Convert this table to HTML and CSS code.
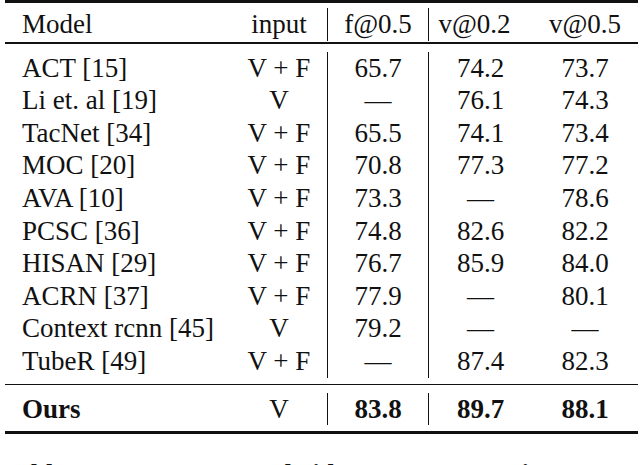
FILE: index.html
```html
<!DOCTYPE html>
<html lang="en">
<head>
    <meta charset="UTF-8">
    <meta name="viewport" content="width=device-width, initial-scale=1.0">
    <title>Frame and video mAP comparison</title>
    <link rel="stylesheet" href="styles.css">
</head>
<body>
    <div class="results">
        <div class="section head">
            <div class="row">
                <div class="cell name">Model</div>
                <div class="cell">input</div>
                <div class="cell split">f@0.5</div>
                <div class="cell split shift">v@0.2</div>
                <div class="cell">v@0.5</div>
            </div>
        </div>

        <div class="section body">
            <div class="row">
                <div class="cell name">ACT [15]</div>
                <div class="cell">V + F</div>
                <div class="cell split">65.7</div>
                <div class="cell split">74.2</div>
                <div class="cell">73.7</div>
            </div>
            <div class="row">
                <div class="cell name">Li et. al [19]</div>
                <div class="cell">V</div>
                <div class="cell split">&mdash;</div>
                <div class="cell split">76.1</div>
                <div class="cell">74.3</div>
            </div>
            <div class="row">
                <div class="cell name">TacNet [34]</div>
                <div class="cell">V + F</div>
                <div class="cell split">65.5</div>
                <div class="cell split">74.1</div>
                <div class="cell">73.4</div>
            </div>
            <div class="row">
                <div class="cell name">MOC [20]</div>
                <div class="cell">V + F</div>
                <div class="cell split">70.8</div>
                <div class="cell split">77.3</div>
                <div class="cell">77.2</div>
            </div>
            <div class="row">
                <div class="cell name">AVA [10]</div>
                <div class="cell">V + F</div>
                <div class="cell split">73.3</div>
                <div class="cell split">&mdash;</div>
                <div class="cell">78.6</div>
            </div>
            <div class="row">
                <div class="cell name">PCSC [36]</div>
                <div class="cell">V + F</div>
                <div class="cell split">74.8</div>
                <div class="cell split">82.6</div>
                <div class="cell">82.2</div>
            </div>
            <div class="row">
                <div class="cell name">HISAN [29]</div>
                <div class="cell">V + F</div>
                <div class="cell split">76.7</div>
                <div class="cell split">85.9</div>
                <div class="cell">84.0</div>
            </div>
            <div class="row">
                <div class="cell name">ACRN [37]</div>
                <div class="cell">V + F</div>
                <div class="cell split">77.9</div>
                <div class="cell split">&mdash;</div>
                <div class="cell">80.1</div>
            </div>
            <div class="row">
                <div class="cell name">Context rcnn [45]</div>
                <div class="cell">V</div>
                <div class="cell split">79.2</div>
                <div class="cell split">&mdash;</div>
                <div class="cell">&mdash;</div>
            </div>
            <div class="row">
                <div class="cell name">TubeR [49]</div>
                <div class="cell">V + F</div>
                <div class="cell split">&mdash;</div>
                <div class="cell split">87.4</div>
                <div class="cell">82.3</div>
            </div>
        </div>

        <div class="section total">
            <div class="row">
                <div class="cell name">Ours</div>
                <div class="cell plain">V</div>
                <div class="cell split">83.8</div>
                <div class="cell split">89.7</div>
                <div class="cell">88.1</div>
            </div>
        </div>
    </div>

    <p class="caption">Table 4. Frame-mAP and video-mAP comparison on UCF101-24.</p>
</body>
</html>
```

FILE: styles.css
```css
* {
    margin: 0;
    padding: 0;
    box-sizing: border-box;
}

body {
    font-family: "Liberation Serif", "Times New Roman", serif;
    font-size: 27px;
    color: #111;
    background-color: white;
    overflow: hidden;
}

.results {
    width: 633px;
    margin-left: 5px;
    border-top: 3px solid #111;
    border-bottom: 3px solid #111;
}

.section {
    display: flex;
    flex-direction: column;
}

.head {
    padding: 5px 0 1px;
    border-bottom: 2px solid #111;
}

.body {
    padding: 8px 0 6px;
    border-bottom: 1px solid #111;
}

.total {
    padding: 8px 0 6px;
    font-weight: bold;
}

.row {
    display: grid;
    grid-template-columns: 226px 96px 101px 104px 106px;
    line-height: 32.6px;
}

.cell {
    text-align: center;
    white-space: nowrap;
}

.cell.name {
    text-align: left;
    padding-left: 17px;
}

.cell.split {
    border-left: 1px solid #111;
}

.cell.shift {
    padding-right: 12px;
}

.cell.plain {
    font-weight: normal;
}

.caption {
    margin-top: 24px;
    padding-left: 2px;
    font-weight: bold;
    line-height: 32px;
}
```
